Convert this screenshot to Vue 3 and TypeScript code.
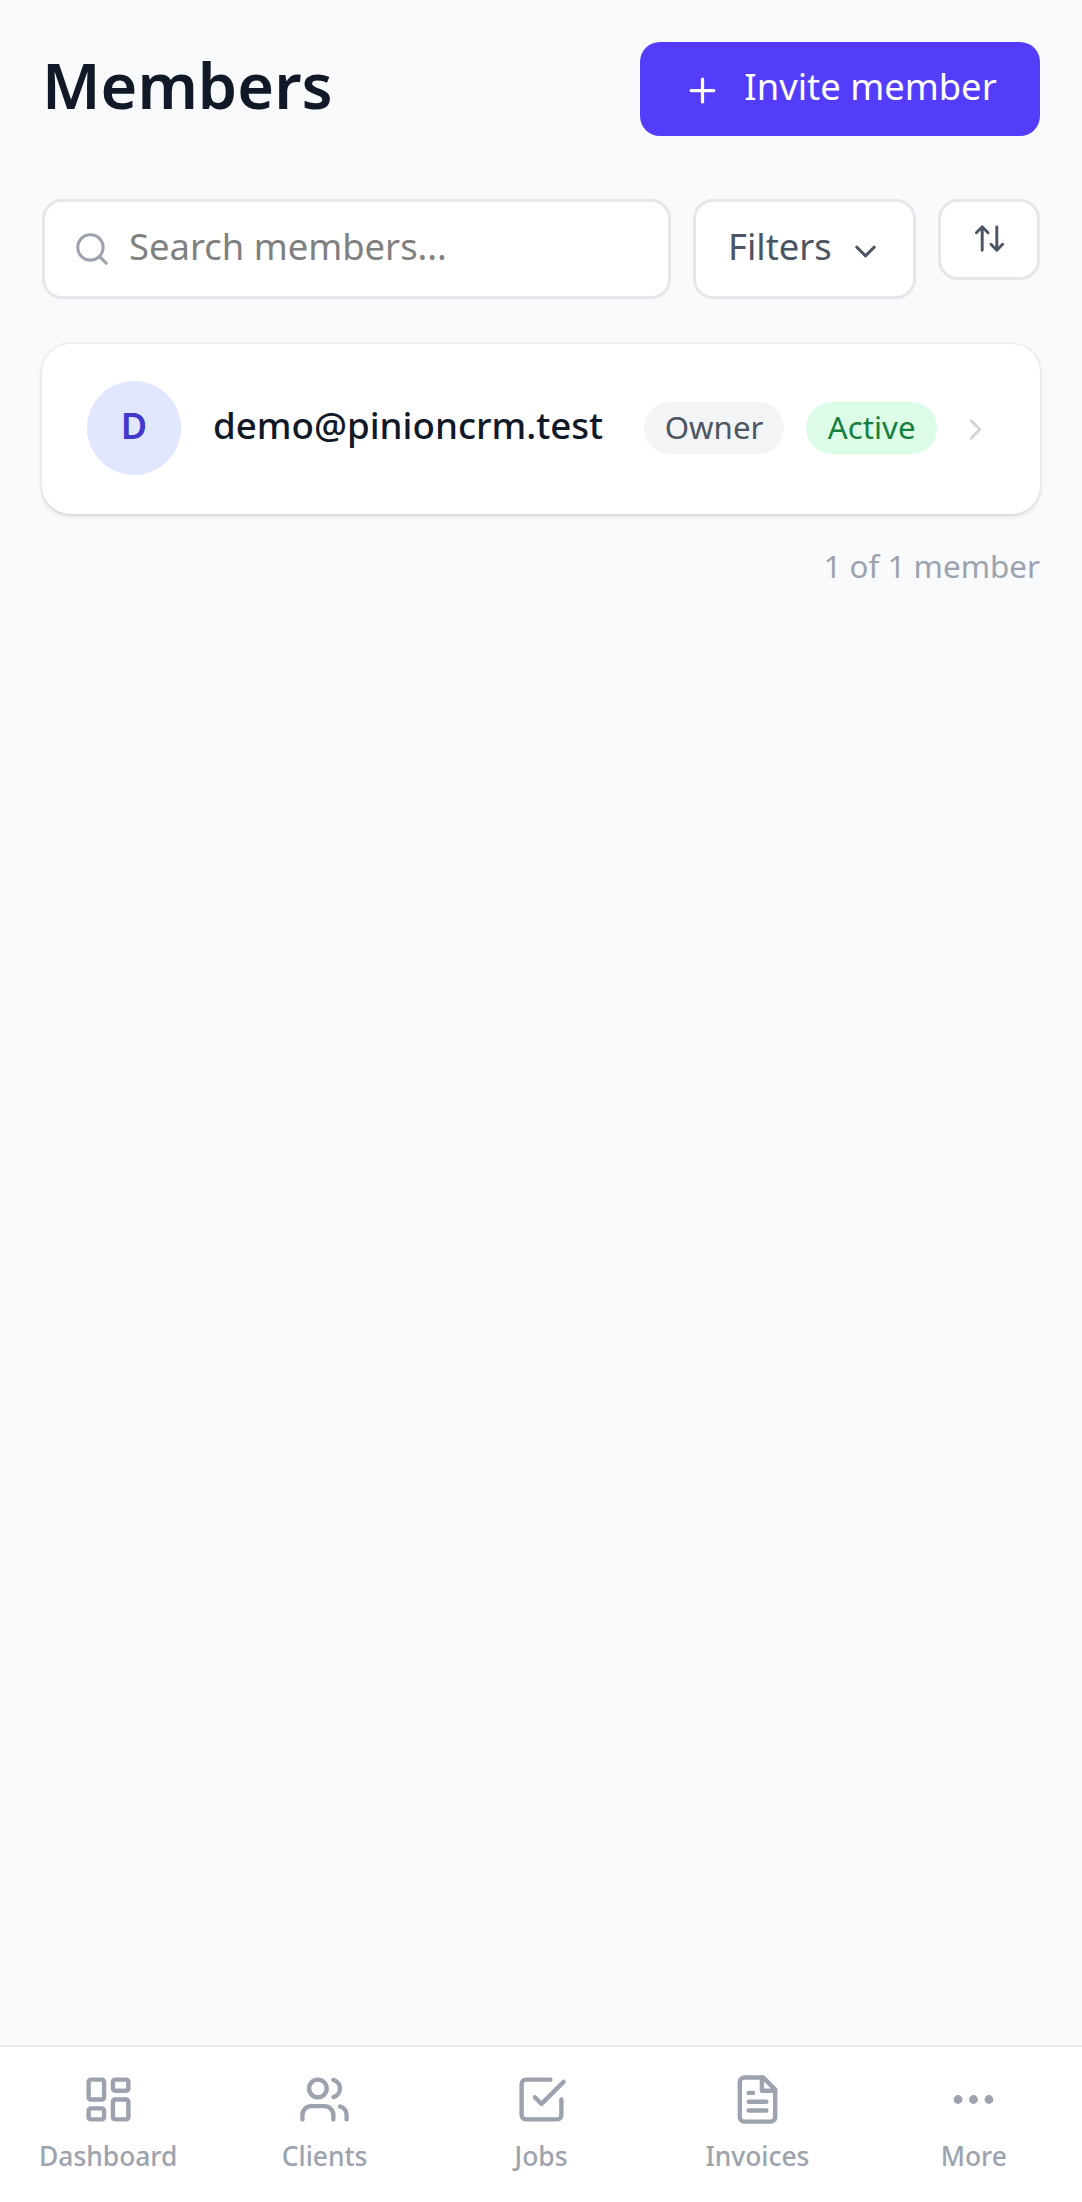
<template>
  <div class="page">
    <main class="content">
      <header class="header">
        <h1>Members</h1>
        <button class="invite-button">
          <svg class="icon-plus" viewBox="0 0 24 24"><path d="M5 12h14M12 5v14" /></svg>
          Invite member
        </button>
      </header>

      <div class="toolbar">
        <div class="search">
          <svg class="icon-search" viewBox="0 0 24 24"><circle cx="11" cy="11" r="8" /><path d="m21 21-4.35-4.35" /></svg>
          <span>Search members...</span>
        </div>
        <button class="filter-button">
          Filters
          <svg class="icon-chevron" viewBox="0 0 24 24"><path d="m6 9 6 6 6-6" /></svg>
        </button>
        <button class="sort-button">
          <svg class="icon-sort" viewBox="0 0 24 24"><path d="m21 16-4 4-4-4M17 20V4M3 8l4-4 4 4M7 4v16" /></svg>
        </button>
      </div>

      <div class="member-card">
        <div class="avatar">D</div>
        <span class="email">demo@pinioncrm.test</span>
        <span class="badge owner">Owner</span>
        <span class="badge active">Active</span>
        <svg class="icon-next" viewBox="0 0 24 24"><path d="m9 18 6-6-6-6" /></svg>
      </div>

      <p class="count">1 of 1 member</p>
    </main>

    <nav class="bottom-nav">
      <div v-for="item in navItems" :key="item.label" class="nav-item">
        <svg class="nav-icon" viewBox="0 0 24 24">
          <path v-for="d in item.paths" :key="d" :d="d" />
        </svg>
        <span>{{ item.label }}</span>
      </div>
    </nav>
  </div>
</template>

<script setup lang="ts">
interface NavItem {
  label: string;
  paths: string[];
}

const navItems: NavItem[] = [
  {
    label: 'Dashboard',
    paths: [
      'M4 3h5a1 1 0 0 1 1 1v7a1 1 0 0 1-1 1H4a1 1 0 0 1-1-1V4a1 1 0 0 1 1-1z',
      'M15 3h5a1 1 0 0 1 1 1v3a1 1 0 0 1-1 1h-5a1 1 0 0 1-1-1V4a1 1 0 0 1 1-1z',
      'M15 12h5a1 1 0 0 1 1 1v7a1 1 0 0 1-1 1h-5a1 1 0 0 1-1-1v-7a1 1 0 0 1 1-1z',
      'M4 16h5a1 1 0 0 1 1 1v3a1 1 0 0 1-1 1H4a1 1 0 0 1-1-1v-3a1 1 0 0 1 1-1z',
    ],
  },
  {
    label: 'Clients',
    paths: [
      'M16 21v-2a4 4 0 0 0-4-4H6a4 4 0 0 0-4 4v2',
      'M9 3a4 4 0 1 0 0 8 4 4 0 0 0 0-8z',
      'M22 21v-2a4 4 0 0 0-3-3.87',
      'M16 3.13a4 4 0 0 1 0 7.75',
    ],
  },
  {
    label: 'Jobs',
    paths: ['m9 11 3 3L22 4', 'M21 12v7a2 2 0 0 1-2 2H5a2 2 0 0 1-2-2V5a2 2 0 0 1 2-2h11'],
  },
  {
    label: 'Invoices',
    paths: [
      'M14.5 2H6a2 2 0 0 0-2 2v16a2 2 0 0 0 2 2h12a2 2 0 0 0 2-2V7.5L14.5 2z',
      'M14 2v6h6',
      'M16 13H8',
      'M16 17H8',
      'M10 9H8',
    ],
  },
  {
    label: 'More',
    paths: [
      'M12 11a1 1 0 1 0 0 2 1 1 0 0 0 0-2z',
      'M19 11a1 1 0 1 0 0 2 1 1 0 0 0 0-2z',
      'M5 11a1 1 0 1 0 0 2 1 1 0 0 0 0-2z',
    ],
  },
];
</script>

<style>
html,
body {
  margin: 0;
  background: #f9fafb;
}
</style>

<style scoped>
.page {
  display: flex;
  flex-direction: column;
  height: 2202px;
  font-family: "Noto Sans", "Liberation Sans", sans-serif;
  background: #f9fafb;
}

.content {
  flex: 1;
  padding: 42px 42px 0;
}

svg {
  fill: none;
  stroke: currentColor;
  stroke-width: 2;
  stroke-linecap: round;
  stroke-linejoin: round;
  flex-shrink: 0;
}

button {
  font-family: inherit;
  cursor: pointer;
}

.header {
  display: flex;
  align-items: center;
  justify-content: space-between;
}

h1 {
  margin: 0;
  padding-bottom: 8px;
  font-size: 63px;
  line-height: 84px;
  font-weight: 600;
  color: #111827;
}

.invite-button {
  display: flex;
  align-items: center;
  justify-content: center;
  gap: 22px;
  width: 400px;
  height: 94px;
  padding: 0 0 6px;
  border: none;
  border-radius: 20px;
  background: #533dfb;
  color: #fff;
  font-size: 36.4px;
}

.icon-plus {
  width: 39px;
  height: 39px;
  margin-top: 9px;
}

.toolbar {
  display: flex;
  align-items: flex-start;
  gap: 22px;
  margin-top: 63px;
}

.search {
  display: flex;
  align-items: center;
  gap: 18px;
  flex: 1;
  height: 100px;
  box-sizing: border-box;
  padding: 0 28px;
  border: 3px solid #e5e7eb;
  border-radius: 20px;
  background: #fff;
  color: #808080;
  font-size: 36.4px;
}

.search span {
  padding-bottom: 6px;
}

.icon-search {
  width: 38px;
  height: 38px;
  color: #9ca3af;
}

.filter-button {
  display: flex;
  align-items: center;
  gap: 16px;
  width: 223px;
  height: 100px;
  box-sizing: border-box;
  padding: 0 32px 6px;
  border: 3px solid #e5e7eb;
  border-radius: 20px;
  background: #fff;
  color: #4b5563;
  font-size: 36.4px;
}

.icon-chevron {
  width: 35px;
  height: 35px;
  margin-top: 10px;
}

.sort-button {
  display: flex;
  align-items: center;
  justify-content: center;
  width: 102px;
  height: 81px;
  box-sizing: border-box;
  padding: 0 0 2px;
  border: 3px solid #e5e7eb;
  border-radius: 20px;
  background: #fff;
  color: #4b5563;
}

.icon-sort {
  width: 35px;
  height: 35px;
}

.member-card {
  display: flex;
  align-items: center;
  height: 170px;
  box-sizing: border-box;
  margin-top: 45px;
  padding: 0 47px 0 45px;
  border-radius: 28px;
  background: #fff;
  box-shadow: 0 1.4px 4px rgba(0, 0, 0, 0.16), 0 0 2px rgba(0, 0, 0, 0.06);
}

.avatar {
  display: flex;
  align-items: center;
  justify-content: center;
  width: 94px;
  height: 94px;
  margin-top: -2px;
  padding-bottom: 6px;
  box-sizing: border-box;
  border-radius: 50%;
  background: #e0e7ff;
  color: #4338ca;
  font-size: 36px;
  font-weight: 600;
}

.email {
  margin-left: 32px;
  margin-top: -8px;
  flex: 1;
  font-size: 36.7px;
  font-weight: 500;
  color: #111827;
}

.badge {
  display: flex;
  align-items: center;
  height: 52px;
  margin-top: -2px;
  padding: 0 21px 3px;
  box-sizing: border-box;
  border-radius: 26px;
  font-size: 31.2px;
}

.owner {
  background: #f3f4f6;
  color: #4b5563;
}

.active {
  margin-left: 22px;
  padding: 0 21.5px 3px;
  background: #dcfce7;
  color: #15803d;
}

.icon-next {
  width: 35px;
  height: 35px;
  margin-left: 21px;
  color: #d1d5db;
}

.count {
  margin: 31px 0 0;
  text-align: right;
  font-size: 31.4px;
  line-height: 42px;
  color: #9ca3af;
}

.bottom-nav {
  display: flex;
  height: 157px;
  box-sizing: border-box;
  border-top: 2px solid #e5e7eb;
  background: #fff;
}

.nav-item {
  display: flex;
  flex: 1;
  flex-direction: column;
  align-items: center;
  padding-top: 26px;
  color: #9ca3af;
  font-size: 26.4px;
  font-weight: 500;
}

.nav-icon {
  width: 53px;
  height: 53px;
}

.nav-item span {
  margin-top: 11px;
  line-height: 38px;
}
</style>
